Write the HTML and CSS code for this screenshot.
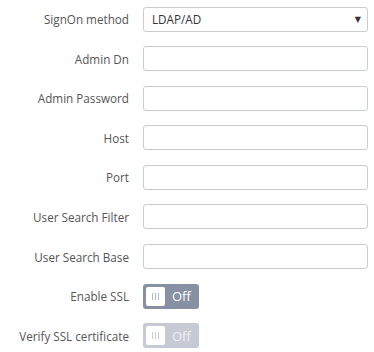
FILE: index.html
```html
<!DOCTYPE html>
<html>
<head>
<meta charset="utf-8">
<link rel="stylesheet" href="styles.css">
</head>
<body>
<form class="form">
  <label class="label">SignOn method</label>
  <div class="select"><span class="select-value">LDAP/AD</span><span class="caret">&#9660;</span></div>

  <label class="label">Admin Dn</label>
  <input class="input" type="text">

  <label class="label">Admin Password</label>
  <input class="input" type="text">

  <label class="label">Host</label>
  <input class="input" type="text">

  <label class="label">Port</label>
  <input class="input" type="text">

  <label class="label">User Search Filter</label>
  <input class="input" type="text">

  <label class="label">User Search Base</label>
  <input class="input" type="text">

  <label class="label">Enable SSL</label>
  <div class="field"><span class="toggle"><span class="knob"><i></i><i></i><i></i></span><span class="toggle-text">Off</span></span></div>

  <label class="label">Verify SSL certificate</label>
  <div class="field"><span class="toggle toggle-disabled"><span class="knob"><i></i><i></i><i></i></span><span class="toggle-text">Off</span></span></div>
</form>
</body>
</html>
```
FILE: styles.css
```css
html, body {
  margin: 0;
  padding: 0;
  background: #fff;
}
body {
  font-family: "Open Sans", "Liberation Sans", sans-serif;
  font-size: 11.7px;
  color: #555;
}
.form {
  display: grid;
  grid-template-columns: 129px 225px;
  column-gap: 14px;
  row-gap: 14.6px;
  padding-top: 6.5px;
  align-items: center;
}
.label {
  text-align: right;
  color: #555;
  white-space: nowrap;
}
.input, .select {
  box-sizing: border-box;
  width: 225px;
  height: 25px;
  border: 1px solid #c9ccd1;
  border-radius: 3px;
  background: #fff;
  margin: 0;
  padding: 0 8px;
  font: inherit;
}
.select {
  display: flex;
  align-items: center;
  justify-content: space-between;
  color: #333;
  padding: 0 6px 0 8px;
}
.select-value {
  font-size: 11.7px;
  color: #333;
}
.caret {
  font-size: 8px;
  color: #333;
  font-family: "DejaVu Sans", sans-serif;
}
.field {
  height: 25px;
  display: flex;
  align-items: center;
}
.toggle {
  box-sizing: border-box;
  width: 56px;
  height: 25px;
  border-radius: 3px;
  background: #8890a3;
  display: flex;
  align-items: center;
  padding: 3px;
  gap: 7px;
}
.toggle-disabled {
  background: #c5cad4;
}
.knob {
  width: 19px;
  height: 19px;
  background: #fff;
  border-radius: 2px;
  display: flex;
  align-items: center;
  justify-content: center;
  gap: 2px;
}
.knob i {
  display: block;
  width: 1px;
  height: 7px;
  background: #a9bdd6;
}
.toggle-disabled .knob i {
  background: #c8ccd4;
}
.toggle-text {
  color: #fff;
  font-size: 13px;
}
.toggle-disabled .toggle-text {
  color: #eef0f4;
}
```
